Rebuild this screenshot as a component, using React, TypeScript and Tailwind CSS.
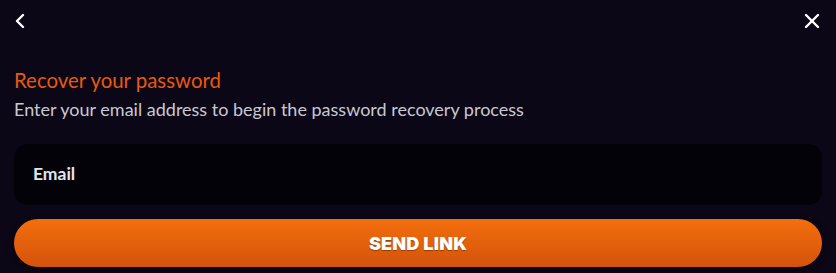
import { ChevronLeft, X } from "lucide-react";

export default function App() {
  return (
    <div className="h-[273px] w-[836px] overflow-hidden bg-[#0b0717] px-[14px] font-['Lato','Open_Sans',sans-serif]">
      <div className="flex h-[43px] items-center justify-between">
        <button className="ml-[-6px] mt-[-2px] text-white">
          <ChevronLeft size={24} strokeWidth={2.4} />
        </button>
        <button className="mr-[-2px] mt-[-1px] text-white">
          <X size={24} strokeWidth={2.4} />
        </button>
      </div>

      <h2 className="mt-[24px] text-[20.4px] leading-[26px] text-[#e8590f]">
        Recover your password
      </h2>
      <p className="mt-[4px] text-[18px] leading-[24px] text-[#c9c8d2]">
        Enter your email address to begin the password recovery process
      </p>

      <div className="mt-[23px] flex h-[61px] items-center rounded-[14px] bg-[#040209] px-[19px]">
        <span className="text-[17.5px] font-bold text-[#e4e4ec]">Email</span>
      </div>

      <button className="mt-[14px] flex h-[48px] w-full items-center justify-center rounded-full bg-gradient-to-b from-[#f36f0d] to-[#d4520b] shadow-[0_2px_6px_rgba(0,0,0,0.5)]">
        <span className="font-['Inter',sans-serif] text-[18px] font-black tracking-[0.2px] text-white [text-shadow:0_1px_1px_rgba(0,0,0,0.35)]">
          SEND LINK
        </span>
      </button>
    </div>
  );
}
